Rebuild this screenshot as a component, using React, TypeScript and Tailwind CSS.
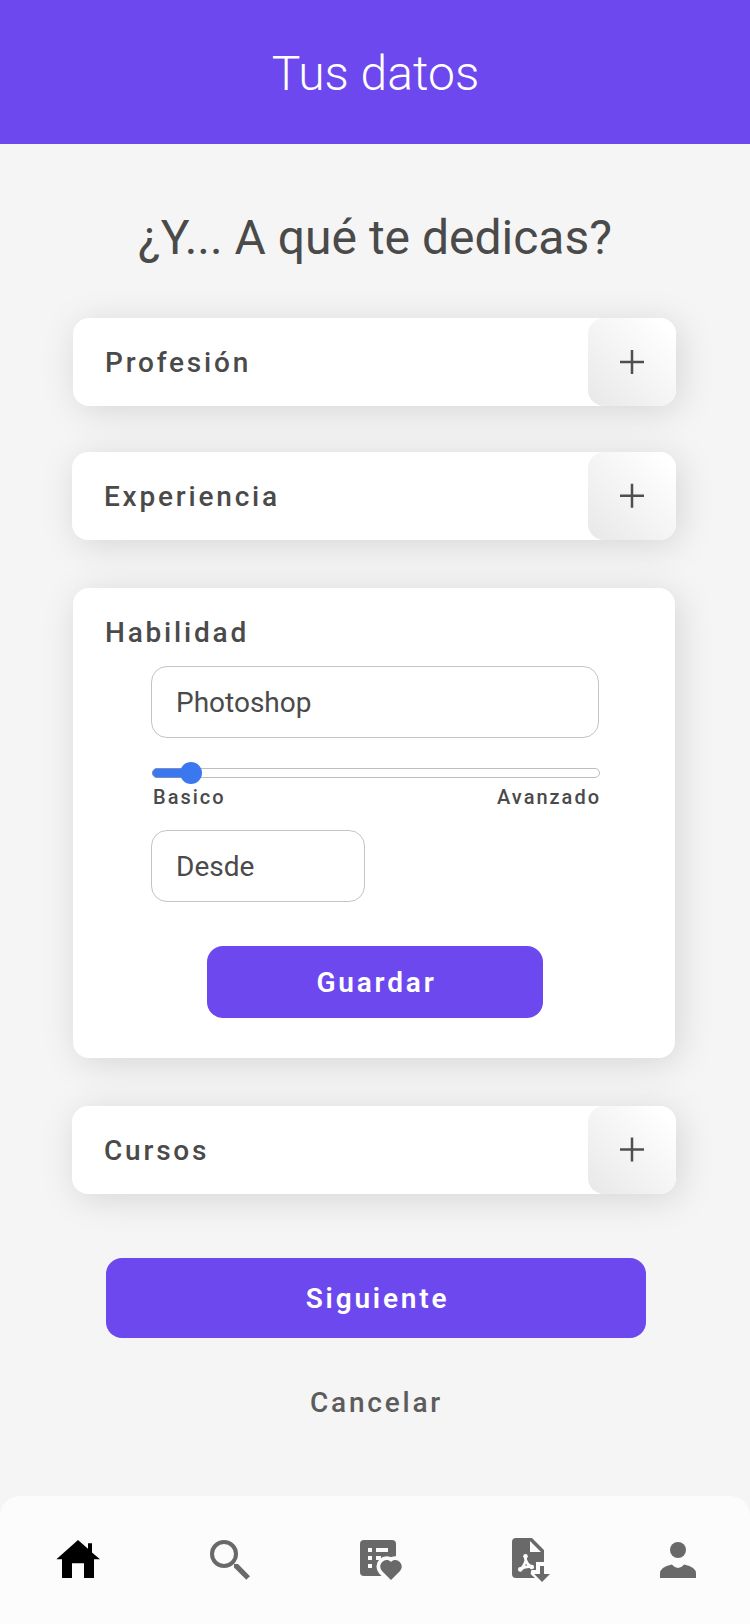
import React from "react";

const shadow = "shadow-[4px_5px_36px_rgba(0,0,0,0.13)]";

function Plus({ cy = 12 }: { cy?: number }) {
  return (
    <svg width="26" height="26" viewBox="-1 -1 26 26" aria-hidden="true">
      <path d={`M0 ${cy}H24M12 ${cy - 12}V${cy + 12}`} stroke="#4f4f4f" strokeWidth="2.5" fill="none" />
    </svg>
  );
}

function AccordionRow({ label, className, cy }: { label: string; className: string; cy?: number }) {
  return (
    <section className={`flex h-[88px] justify-between rounded-2xl bg-white ${shadow} ${className}`}>
      <h2 className="pt-[29px] pl-8 text-[28px] leading-8 font-medium tracking-[2.8px]">{label}</h2>
      <button
        aria-label={label}
        className="flex size-[88px] items-center justify-center rounded-2xl bg-linear-to-tr from-[#e8e8e8] to-[#ffffff] to-90%"
      >
        <Plus cy={cy} />
      </button>
    </section>
  );
}

function Field({ value, className }: { value: string; className: string }) {
  return (
    <div className={`flex h-[72px] items-center rounded-2xl border border-[#c4c4c4] pt-0.5 pl-6 text-[28px] leading-8 ${className}`}>
      {value}
    </div>
  );
}

function LevelSlider() {
  return (
    <div className="mt-6 ml-[79px] w-[448px]">
      <svg className="block" width="448" height="22" viewBox="0 0 448 22" aria-hidden="true">
        <rect x="0.5" y="6.5" width="447" height="9" rx="4.5" fill="#fff" stroke="#bdbdbd" />
        <rect x="0.5" y="6.5" width="44" height="9" rx="4.5" fill="#3b78f0" stroke="#7590c8" />
        <circle cx="39" cy="11" r="11" fill="#3b78f0" />
      </svg>
      <div className="flex justify-between pt-px pl-px text-xl leading-6 font-medium tracking-[2px]">
        <span>Basico</span>
        <span className="-mr-px">Avanzado</span>
      </div>
    </div>
  );
}

function NavBar() {
  return (
    <nav className="mt-auto flex h-32 justify-between rounded-t-[20px] bg-[#fcfcfc] pt-10 pr-12 pl-[54px] text-[#696969]">
      <svg width="48" height="48" viewBox="0 0 48 48" fill="#000">
        <path d="M24 4L34 12.8V7.3H38V16.4L46 23.3H40V42H30V27.3H18V42H8V23.3H2.4Z" />
      </svg>
      <svg width="48" height="48" viewBox="0 0 48 48" fill="currentColor">
        <circle cx="20" cy="18" r="12" fill="none" stroke="currentColor" strokeWidth="4" />
        <path d="M30 28H34L46 40.2L42.3 43.7L30 31.5Z" />
      </svg>
      <svg width="48" height="48" viewBox="0 0 48 48" fill="currentColor">
        <rect x="6" y="4" width="36" height="36" rx="4" />
        <path d="M14 12h4v4h-4zM22 12h12v4H22zM14 20h4v4h-4zM22 20h5v4h-5zM14 28h4v4h-4z" fill="#fcfcfc" />
        <path
          d="M37 44L28 35C22.5 28.500 31.500 20 37 26C42.500 20 51.500 28.500 46 35Z"
          fill="#fcfcfc"
          stroke="#fcfcfc"
          strokeWidth="7.500"
          strokeLinejoin="round"
        />
        <path d="M37 44L28 35C22.5 28.500 31.500 20 37 26C42.500 20 51.500 28.500 46 35Z" />
      </svg>
      <svg width="48" height="48" viewBox="0 0 48 48" fill="currentColor">
        <path d="M12 2H28L40 14V26H32V34H27.500Q26.500 36 26.800 38.300L31 42H12Q8 42 8 38V6Q8 2 12 2ZM26 5V16H37Z" />
        <path d="M36 30H40V38H46L38 46L30.200 38H36Z" />
        <path
          d="M21.5 19.800C21 24 23 28.500 28 31M21.500 19.800C22.500 25 20 30.500 16 33.600M16 33.600C19 31.200 23.500 30 28 31"
          fill="none"
          stroke="#fcfcfc"
          strokeWidth="2.8"
          strokeLinecap="round"
        />
        <g fill="#fcfcfc">
          <circle cx="21.5" cy="20.3" r="2.3" />
          <circle cx="16.3" cy="33.400" r="2.300" />
          <circle cx="27.800" cy="31" r="2.300" />
        </g>
      </svg>
      <svg width="48" height="48" viewBox="0 0 48 48" fill="currentColor">
        <circle cx="24" cy="14" r="8" />
        <path d="M17.800 28.500Q24 35.500 30.200 28.500Q42 31 42 37.500V42H6V37.500Q6 31 17.800 28.500Z" />
      </svg>
    </nav>
  );
}

export default function App() {
  return (
    <div className="flex h-[1624px] w-[750px] flex-col bg-[#f5f5f5] font-['Roboto',sans-serif] text-[#4a4a4a]">
      <header className="h-36 bg-[#6c48ee] pt-[46px] pl-px text-center text-5xl leading-14 font-light text-white">
        Tus datos
      </header>
      <main className="flex flex-col">
        <h1 className="mt-[66px] text-center text-5xl leading-14">¿Y... A qué te dedicas?</h1>
        <AccordionRow label="Profesión" className="mt-[52px] mr-[74px] ml-[73px]" />
        <AccordionRow label="Experiencia" className="mt-[46px] mr-[74px] ml-[72px]" cy={11.7} />
        <section className={`mt-12 mr-[75px] ml-[73px] flex h-[470px] flex-col rounded-2xl bg-white ${shadow}`}>
          <h2 className="pt-[29px] pl-8 text-[28px] leading-8 font-medium tracking-[2.8px]">Habilidad</h2>
          <Field value="Photoshop" className="mt-[17px] ml-[78px] w-[448px]" />
          <LevelSlider />
          <Field value="Desde" className="mt-[21px] ml-[78px] w-[214px]" />
          <button className="mt-11 ml-[134px] h-[72px] w-[336px] rounded-2xl bg-[#6c48ee] pt-0.5 pl-[3px] text-[28px] font-semibold tracking-[2.8px] text-white">
            Guardar
          </button>
        </section>
        <AccordionRow label="Cursos" className="mt-12 mr-[74px] ml-[72px]" cy={11.5} />
        <button className="mt-16 ml-[106px] h-20 w-[540px] rounded-2xl bg-[#6c48ee] pt-0.5 pl-[3px] text-[28px] font-semibold tracking-[2.8px] text-white">
          Siguiente
        </button>
        <button className="mt-[49px] self-center pl-[3px] text-[28px] leading-8 font-medium tracking-[2.8px] text-[#5c5c5c]">
          Cancelar
        </button>
      </main>
      <NavBar />
    </div>
  );
}
